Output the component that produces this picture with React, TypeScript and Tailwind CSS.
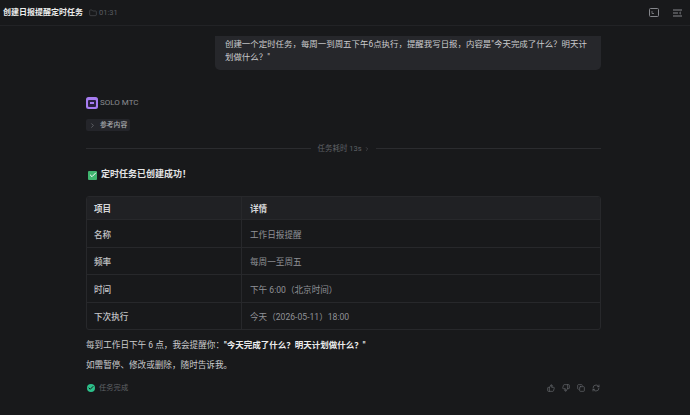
import React from "react";
import { Folder, ChevronRight, ThumbsUp, ThumbsDown, Copy, RefreshCw, Check } from "lucide-react";

const FONT = "font-['Roboto','Noto_Sans_CJK_SC',sans-serif]";

const rows = [
  { label: "名称", value: "工作日报提醒", height: "h-[28px]" },
  { label: "频率", value: "每周一至周五", height: "h-[27px]" },
  { label: "时间", value: "下午 6:00（北京时间）", height: "h-[28px]" },
  { label: "下次执行", value: "今天（2026-05-11）18:00", height: "h-[27px]" },
];

function Header() {
  return (
    <header className="flex h-[26px] items-center justify-between border-b border-[#222326] pl-[3px] pr-[8px]">
      <div className="flex items-center">
        <span className="text-[8px] font-bold text-[#eceded]">创建日报提醒定时任务</span>
        <Folder className="ml-[6px] h-[8px] w-[8px] text-[#5c5e63]" strokeWidth={1.6} />
        <span className="ml-[2px] text-[7.5px] text-[#5c5e63]">01:31</span>
      </div>
      <div className="flex items-center gap-[14px] text-[#85878c]">
        <svg width="10" height="9" viewBox="0 0 10 9" fill="none" stroke="currentColor">
          <rect x="0.5" y="0.5" width="9" height="8" rx="1" />
          <path d="M3 3v2.5h2" strokeWidth="0.8" />
        </svg>
        <svg width="9" height="8" viewBox="0 0 9 8" fill="none" stroke="currentColor">
          <path d="M0 1h9M0 4h5M0 7h9" />
          <path d="M8 2.8L6.5 4 8 5.2" strokeWidth="0.8" />
        </svg>
      </div>
    </header>
  );
}

function ScheduleTable() {
  return (
    <div className="mt-[14px] overflow-hidden rounded-[3px] border border-[#27282b] text-[8.6px]">
      <div className="flex h-[22px] items-center bg-[#202124] font-bold text-[#d6d7d9]">
        <div className="flex h-full w-[155px] items-center border-r border-[#27282b] pl-[7px] pt-[3px]">项目</div>
        <div className="pl-[8px] pt-[3px]">详情</div>
      </div>
      {rows.map((row) => (
        <div key={row.label} className={`flex items-center border-t border-[#27282b] ${row.height}`}>
          <div className="flex h-full w-[155px] items-center border-r border-[#27282b] pl-[7px] pt-[4px] font-medium text-[#c4c5c8]">
            {row.label}
          </div>
          <div className="pl-[8px] pt-[4px] text-[#909297]">{row.value}</div>
        </div>
      ))}
    </div>
  );
}

export default function App() {
  return (
    <div className={`flex h-[415px] w-[690px] flex-col overflow-hidden bg-[#18191b] ${FONT}`}>
      <Header />
      <main className="ml-[86px] flex w-[515px] flex-col pt-[10px]">
        {/* user message */}
        <div className="ml-[129px] h-[34px] rounded-b-[5px] bg-[#26272b] pl-[10px] pr-[12px] pt-[2px] text-[8.45px] leading-[13px] text-[#cbccce]">
          创建一个定时任务，每周一到周五下午6点执行，提醒我写日报，内容是"今天完成了什么？明天计划做什么？"
        </div>

        <div className="mt-[27px] flex items-center">
          <span className="flex h-[12px] w-[12px] items-center justify-center rounded-[2.5px] bg-[#a67cf0]">
            <span className="flex h-[7px] w-[8px] items-center justify-center rounded-[1px] bg-[#2a2140]">
              <span className="h-[1.5px] w-[4px] bg-[#a67cf0]" />
            </span>
          </span>
          <span className="ml-[2px] text-[8px] text-[#8b8d92]">SOLO MTC</span>
        </div>

        <div className="mt-[10px] flex h-[12px] w-[44px] items-center rounded-[2px] bg-[#24252a] pl-[3px] text-[6.8px] font-medium text-[#a9abaf]">
          <ChevronRight className="h-[7px] w-[7px] text-[#85878c]" strokeWidth={2} />
          <span className="ml-[4px]">参考内容</span>
        </div>

        {/* divider */}
        <div className="mt-[12px] flex items-center">
          <div className="h-px flex-1 bg-[#2b2c2f]" />
          <div className="flex items-center px-[6px] text-[7.5px] text-[#5f6166]">
            <span>任务耗时 13s</span>
            <ChevronRight className="ml-[2px] h-[6px] w-[6px]" strokeWidth={2} />
          </div>
          <div className="h-px flex-1 bg-[#2b2c2f]" />
        </div>

        <div className="ml-[2px] mt-[14px] flex items-center">
          <span className="flex h-[9px] w-[9px] items-center justify-center rounded-[1px] bg-[#3fb56f]">
            <Check className="h-[8px] w-[8px] text-white" strokeWidth={3} />
          </span>
          <span className="ml-[4px] text-[9px] font-bold text-[#e3e4e5]">定时任务已创建成功！</span>
        </div>

        <ScheduleTable />

        <p className="mt-[9px] text-[8.6px] leading-[13px] text-[#cbccce]">
          每到工作日下午 6 点，我会提醒你：
          <span className="text-[8.5px] font-bold text-[#eceded]">"今天完成了什么？明天计划做什么？"</span>
        </p>
        <p className="mt-[7px] text-[8.6px] leading-[13px] text-[#cbccce]">如需暂停、修改或删除，随时告诉我。</p>

        <div className="mt-[11px] flex items-center justify-between">
          <div className="ml-[1px] flex items-center">
            <span className="flex h-[8px] w-[8px] items-center justify-center rounded-full bg-[#2cc08a]">
              <Check className="h-[6px] w-[6px] text-[#18191b]" strokeWidth={4} />
            </span>
            <span className="ml-[4px] text-[7.3px] text-[#5f6166]">任务完成</span>
          </div>
          <div className="flex items-center gap-[7px] pr-[1px] text-[#6a6c71]">
            <ThumbsUp className="h-[8px] w-[8px]" strokeWidth={2} />
            <ThumbsDown className="h-[8px] w-[8px]" strokeWidth={2} />
            <Copy className="h-[8px] w-[8px]" strokeWidth={2} />
            <RefreshCw className="h-[8px] w-[8px]" strokeWidth={2} />
          </div>
        </div>
      </main>
    </div>
  );
}
